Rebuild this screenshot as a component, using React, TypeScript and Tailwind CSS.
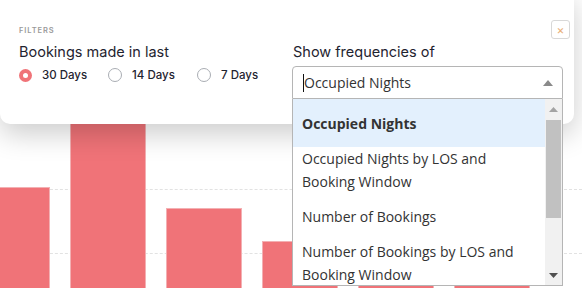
import React from "react";

const bars = [
    { h: 101 },
    { h: 200 },
    { h: 80 },
    { h: 47 },
    { h: 60 },
    { h: 40 },
];

const options = [
    "Occupied Nights by LOS and Booking Window",
    "Number of Bookings",
    "Number of Bookings by LOS and Booking Window",
];

const Radio = ({ label, checked }: { label: string; checked?: boolean }) => (
    <label className="flex items-center gap-[10px] w-[89px]">
        {checked ? (
            <span className="w-[13px] h-[13px] rounded-full bg-[#f07378] flex items-center justify-center">
                <span className="w-[5px] h-[5px] rounded-full bg-white" />
            </span>
        ) : (
            <span className="w-[14px] h-[14px] rounded-full border border-[#a9adb3] bg-white" />
        )}
        <span className="text-[11.5px] font-medium text-[#1f2430]">{label}</span>
    </label>
);

export default function App() {
    return (
        <div className="relative w-[582px] h-[288px] overflow-hidden bg-white" style={{ fontFamily: "Inter, 'Noto Sans', sans-serif" }}>
            {/* chart behind the filter popover */}
            <div className="absolute inset-0">
                <div className="absolute left-0 right-0 top-[189px] border-t border-dashed border-[#e2e2e2]" />
                <div className="absolute left-0 right-0 top-[253px] border-t border-dashed border-[#e2e2e2]" />
                <div className="absolute left-[-26px] bottom-0 flex items-end gap-[20px]">
                    {bars.map((b, i) => (
                        <div key={i} className="w-[76px] bg-[#f07378] border border-[#f3b0b3] border-b-0" style={{ height: b.h }} />
                    ))}
                </div>
            </div>

            {/* filter card */}
            <div className="absolute left-0 top-[-10px] w-[574px] h-[134px] bg-white rounded-[10px] shadow-[0_10px_28px_rgba(0,0,0,0.2)] flex px-[19px] pt-[37px]">
                <div className="w-[274px] flex flex-col">
                    <div className="text-[7.5px] font-semibold tracking-[0.12em] text-[#9a9a9a] leading-none">FILTERS</div>
                    <div className="mt-[7px] text-[14.5px] text-[#1f2430] leading-[20px]">Bookings made in last</div>
                    <div className="mt-[5px] flex items-center">
                        <Radio label="30 Days" checked />
                        <Radio label="14 Days" />
                        <Radio label="7 Days" />
                    </div>
                </div>
                <div className="flex flex-col pt-[15px]">
                    <div className="text-[14.5px] text-[#1f2430] leading-[20px]">Show frequencies of</div>
                </div>
                <button className="absolute left-[551px] top-[30px] w-[19px] h-[19px] rounded-[3px] border border-[#d8d8d8] flex items-center justify-center text-[12px] leading-none text-[#e9b07a]">
                    ×
                </button>
            </div>

            {/* select with open list */}
            <div className="absolute left-[292px] top-[66px] w-[271px]" style={{ fontFamily: "'Open Sans', 'Noto Sans', sans-serif" }}>
                <div className="h-[33px] border border-[#b5b5b5] rounded-t-[4px] bg-white flex items-center pl-[10px] pr-[9px]">
                    <span className="w-px h-[18px] bg-[#111]" />
                    <span className="flex-1 text-[14px] text-[#333]">Occupied Nights</span>
                    <svg width="10" height="6" viewBox="0 0 10 6"><path d="M0 6 L5 0 L10 6 Z" fill="#8a8a8a" /></svg>
                </div>
                <div className="h-[187px] border border-t-0 border-[#b5b5b5] bg-white flex overflow-hidden">
                    <div className="flex-1 flex flex-col text-[14px] text-[#333]">
                        <div className="h-[48px] shrink-0 bg-[#e3f0fd] flex items-center pl-[9px] font-bold">Occupied Nights</div>
                        {options.map((o) => (
                            <div key={o} className="shrink-0 pl-[9px] pr-[20px] pb-[12px] leading-[23px]">{o}</div>
                        ))}
                    </div>
                    <div className="w-[17px] bg-[#f1f1f1] flex flex-col items-center">
                        <div className="h-[21px] flex items-center justify-center">
                            <svg width="9" height="5" viewBox="0 0 9 5"><path d="M0 5 L4.5 0 L9 5 Z" fill="#a3a3a3" /></svg>
                        </div>
                        <div className="w-[15px] h-[98px] bg-[#c1c1c1]" />
                        <div className="flex-1" />
                        <div className="h-[20px] flex items-center justify-center">
                            <svg width="9" height="5" viewBox="0 0 9 5"><path d="M0 0 L4.5 5 L9 0 Z" fill="#505050" /></svg>
                        </div>
                    </div>
                </div>
            </div>
        </div>
    );
}
